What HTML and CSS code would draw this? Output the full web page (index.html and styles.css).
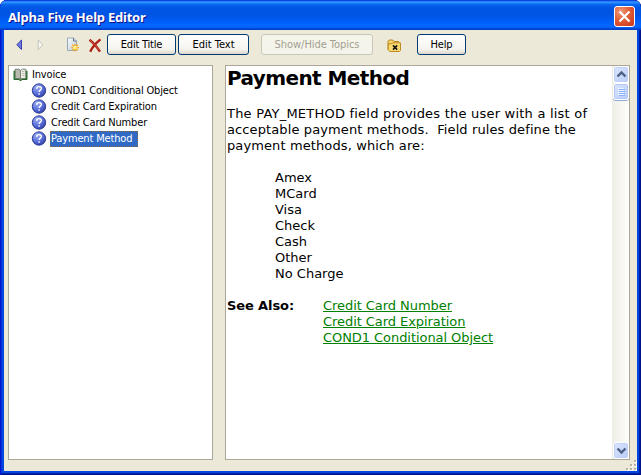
FILE: index.html
```html
<!DOCTYPE html>
<html lang="en">
<head>
<meta charset="utf-8">
<title>Alpha Five Help Editor</title>
<link rel="stylesheet" href="styles.css">
</head>
<body>
<svg width="0" height="0" class="defs">
  <defs>
    <radialGradient id="ball" cx="35%" cy="28%" r="75%"><stop offset="0" stop-color="#a3b2f5"/><stop offset=".55" stop-color="#5f75dc"/><stop offset="1" stop-color="#3443aa"/></radialGradient>
    <linearGradient id="page" x2="1" y2="1"><stop offset="0" stop-color="#fff"/><stop offset="1" stop-color="#b9c6d2"/></linearGradient>
    <symbol id="topic" viewBox="0 0 16 16"><circle cx="8" cy="7.5" r="6.7" fill="url(#ball)" stroke="#26348f" stroke-width=".9"/><path d="M5.7 5.7C5.7 2.9 10.4 2.9 10.4 5.6C10.4 7.2 8.1 7.2 8.1 9.1M8.1 10.3V11.8" fill="none" stroke="#fff" stroke-width="1.4"/></symbol>
  </defs>
</svg>
<div class="window">
  <header class="titlebar">
    <h1>Alpha Five Help Editor</h1>
    <button class="close" aria-label="Close"><svg width="19" height="19" viewBox="0 0 19 19"><path d="M4.5 4.5L14.5 14.5M14.5 4.5L4.5 14.5" stroke="#fff" stroke-width="2.2"/></svg></button>
  </header>
  <div class="client">
    <nav class="toolbar">
      <svg class="back" width="7" height="12" viewBox="0 0 7 12"><path d="M5.5 .9V10.6L.8 5.8Z" fill="#6c79df" stroke="#3941ac"/></svg>
      <svg class="forward" width="7" height="12" viewBox="0 0 7 12"><path d="M1.2 1V10.7L5.8 5.8Z" fill="#f7f6f1" stroke="#c4c3bd"/></svg>
      <svg class="new" width="14" height="15" viewBox="0 0 14 15"><path d="M1.5 1H7.5L10.5 4V13.5H1.5Z" fill="url(#page)" stroke="#9aa7b6"/><path d="M7.5 1V4H10.5" fill="#d7dee6" stroke="#66778c"/><path d="M9 6.7V14.5M5.2 10.6H13M6.3 7.8L11.8 13.4M11.8 7.8L6.3 13.4" stroke="#f5ad22" stroke-width="1.3"/><circle cx="9" cy="10.6" r="1.9" fill="#fff18b"/></svg>
      <svg class="delete" width="14" height="15" viewBox="0 0 14 15"><path d="M1.5 1.8C5 4.5 8.5 8.5 12 13.6M12.4 1.4C8 5 4.4 9 2.2 13.7" fill="none" stroke="#ae2115" stroke-width="2.4"/><path d="M2 2.1C5.4 4.8 8.2 8 11 12" fill="none" stroke="#df6550" stroke-width=".7"/></svg>
      <button class="btn edit-title"><span>Edit Title</span></button>
      <button class="btn edit-text"><span>Edit Text</span></button>
      <button class="btn topics" disabled><span>Show/Hide Topics</span></button>
      <svg class="folder" width="15" height="14" viewBox="0 0 15 14"><path d="M1 10.7V2.5L2.2 1H5.7L7 2.5H11.7L12.5 3.7V5" fill="#f5d56c" stroke="#ba841d"/><path d="M2.7 12.5L1.3 10.8V4.7H5L6 3.8H13.5V11.5L12.5 12.5Z" fill="#f9d970" stroke="#c08b26"/><path d="M6 6.4L10.2 10.6M10.2 6.4L6 10.6" stroke="#111" stroke-width="1.5"/></svg>
      <button class="btn help"><span>Help</span></button>
    </nav>
    <main class="panes">
      <section class="tree">
        <div class="row root">
          <svg width="15" height="14" viewBox="0 0 15 14"><path d="M1 2.8V11.5H6L7.5 13L9 11.5H14V2.8" fill="#267d31" stroke="#1d6a27"/><path d="M2.2 1.2H5.7L7.5 2.4V11.5L6 10.5H2.2Z" fill="#b9b9b0" stroke="#777d70"/><path d="M7.5 2.4L9.3 1.2H12.8V10.5H9L7.5 11.5Z" fill="#efefe6" stroke="#777d70"/><path d="M3.5 3.5H6M3.5 5.5H6M3.5 7.5H6M9 3.5H11.5M9 5.5H11.5M9 7.5H11.5" stroke="#b5b9b1"/></svg>
          <span class="label">Invoice</span>
        </div>
        <div class="row"><svg width="16" height="16"><use href="#topic"/></svg><span class="label">COND1 Conditional Object</span></div>
        <div class="row"><svg width="16" height="16"><use href="#topic"/></svg><span class="label">Credit Card Expiration</span></div>
        <div class="row"><svg width="16" height="16"><use href="#topic"/></svg><span class="label">Credit Card Number</span></div>
        <div class="row"><svg width="16" height="16"><use href="#topic"/></svg><span class="label selected">Payment Method</span></div>
      </section>
      <section class="viewer">
        <article>
          <h2>Payment Method</h2>
          <p><span class="wide">The PAY_METHOD field provides the user with a list of</span><br>acceptable payment methods.&nbsp; Field rules define the<br>payment methods, which are:</p>
          <ul><li>Amex</li><li>MCard</li><li>Visa</li><li>Check</li><li>Cash</li><li>Other</li><li>No Charge</li></ul>
          <div class="see"><b>See Also:</b><div class="links"><a href="#">Credit Card Number</a><a href="#">Credit Card Expiration</a><a href="#">COND1 Conditional Object</a></div></div>
        </article>
        <div class="scroll">
          <div class="sb"><svg width="15" height="15" viewBox="0 0 15 15"><path d="M3.5 9.5L7.5 5.5L11.5 9.5" fill="none" stroke="#4d6185" stroke-width="2.4"/></svg></div>
          <div class="sb thumb"><svg width="15" height="15" viewBox="0 0 15 15"><path d="M4 4.5H10M4 6.5H10M4 8.5H10M4 10.5H10" stroke="#eef4fe"/><path d="M5 5.5H11M5 7.5H11M5 9.5H11M5 11.5H11" stroke="#8cb0f8"/></svg></div>
          <div class="sb down"><svg width="15" height="15" viewBox="0 0 15 15"><path d="M3.5 5.5L7.5 9.5L11.5 5.5" fill="none" stroke="#4d6185" stroke-width="2.4"/></svg></div>
        </div>
      </section>
    </main>
    <svg class="grip" width="11" height="11" viewBox="0 0 11 11"><path d="M9 1h2v2H9zM5 5h2v2H5zM9 5h2v2H9zM1 9h2v2H1zM5 9h2v2H5zM9 9h2v2H9z" fill="#fff"/><path d="M8 0h2v2H8zM4 4h2v2H4zM8 4h2v2H8zM0 8h2v2H0zM4 8h2v2H4zM8 8h2v2H8z" fill="#b8b4a3"/></svg>
  </div>
</div>
</body>
</html>
```
FILE: styles.css
```css
* { box-sizing: border-box; }
body { margin: 0; background: #fff; overflow: hidden; font-family: "DejaVu Sans Condensed", "DejaVu Sans", sans-serif; font-size: 11px; color: #000; }
svg { display: block; flex: none; }
.defs { position: absolute; }
button { margin: 0; padding: 0; font: inherit; }

.window { width: 641px; height: 475px; padding: 0 4px 4px; display: flex; flex-direction: column; border-radius: 7px 7px 0 0; background: #0046e0; box-shadow: inset 1px 0 #0019cf, inset -1px 0 #00138c, inset 0 -1px #00138c, inset 2px 0 #0831d9, inset -2px 0 #001ea0, inset 0 -2px #001ea0; overflow: hidden; }
.titlebar { height: 30px; flex: none; margin: 0 -4px; padding: 1px 6px 0 8px; display: flex; align-items: center; justify-content: space-between; border-radius: 7px 7px 0 0; background: linear-gradient(#0831d9 0, #0a55e8 3%, #3a92ff 6%, #288eff 9%, #0668ee 15%, #0055e5 26%, #0054e3 50%, #005bf5 67%, #0066ff 85%, #0061f6 91%, #0048d5 96%, #0038be 100%); }
.titlebar h1 { margin: 2px 0 0; font: bold 13px/20px "Noto Sans", sans-serif; letter-spacing: -.22px; color: #fff; text-shadow: 1px 1px #0f1089; }
.close { width: 21px; height: 21px; margin-top: 2px; border: 1px solid #fff; border-radius: 3px; background: radial-gradient(circle at 30% 25%, #ef9a7a, #e15c35 45%, #c8361b 100%); display: grid; place-items: center; }

.client { flex: 1; position: relative; padding: 4px 7px 11px 4px; background: #ece9d8; display: flex; flex-direction: column; }
.toolbar { height: 21px; display: flex; align-items: center; }
.back { margin-left: 8px; }
.forward { margin-left: 14px; }
.new { margin-left: 22px; }
.new + .delete { margin: 1px 0 0 8px; }
.btn { height: 21px; border: 1px solid #003c74; border-radius: 3px; background: linear-gradient(#fff, #f5f4ef 75%, #dcd7cc); color: #000; line-height: 19px; letter-spacing: -.15px; white-space: nowrap; }
.btn[disabled] { border-color: #c9c7ba; background: #f5f4ea; color: #a1a192; letter-spacing: -.05px; }
.edit-title { width: 69px; margin-left: 5px; letter-spacing: -.2px; }
.edit-text { width: 71px; margin-left: 2px; letter-spacing: 0; }
.topics { width: 112px; margin-left: 12px; }
.folder { margin: 3px 0 0 14px; }
.help { width: 49px; margin-left: 15px; }

.panes { flex: 1; margin-top: 10px; display: grid; grid-template-columns: 205px 405px; gap: 12px; min-height: 0; }
.tree, .viewer { border: 1px solid #aca899; background: #fff; }
.tree { padding-top: 1px; }
.row { height: 16px; padding-left: 22px; display: flex; align-items: center; }
.root { padding-left: 4px; }
.label { height: 16px; margin-left: 3px; padding: 0 1px; line-height: 16px; letter-spacing: -.16px; white-space: nowrap; }
.selected { width: 88px; padding: 0; border: 1px dotted #8a6a3c; background: #316ac5; color: #fff; line-height: 14px; }

.viewer { display: flex; justify-content: space-between; font: 13px/16px "DejaVu Sans", sans-serif; }
article { padding-left: 1px; white-space: nowrap; }
h2 { margin: 0; font-size: 20px; line-height: 24px; letter-spacing: -.6px; }
p { margin: 16px 0; letter-spacing: .11px; }
.wide { letter-spacing: .22px; }
ul { margin: 0 0 16px; padding: 0 0 0 48px; list-style: none; }
.see { display: flex; }
.see b { width: 96px; letter-spacing: -.1px; }
.links { display: flex; flex-direction: column; letter-spacing: -.06px; }
a { color: #008000; text-decoration: underline; }
.scroll { width: 17px; padding: 0 0 0 1px; display: flex; flex-direction: column; background: linear-gradient(90deg, #eeede5, #fefefb); }
.sb { width: 16px; height: 17px; border: 1px solid #fff; border-radius: 3px; background: linear-gradient(135deg, #dce6fe, #b9cbf8); box-shadow: inset 0 0 0 1px #c0d0fa; display: grid; place-items: center; }
.thumb { height: 17px; box-shadow: inset 0 0 0 1px #b4c8f6, 0 1px #91a9da; }
.down { margin-top: auto; }
.grip { position: absolute; right: 0; bottom: 0; }
```
